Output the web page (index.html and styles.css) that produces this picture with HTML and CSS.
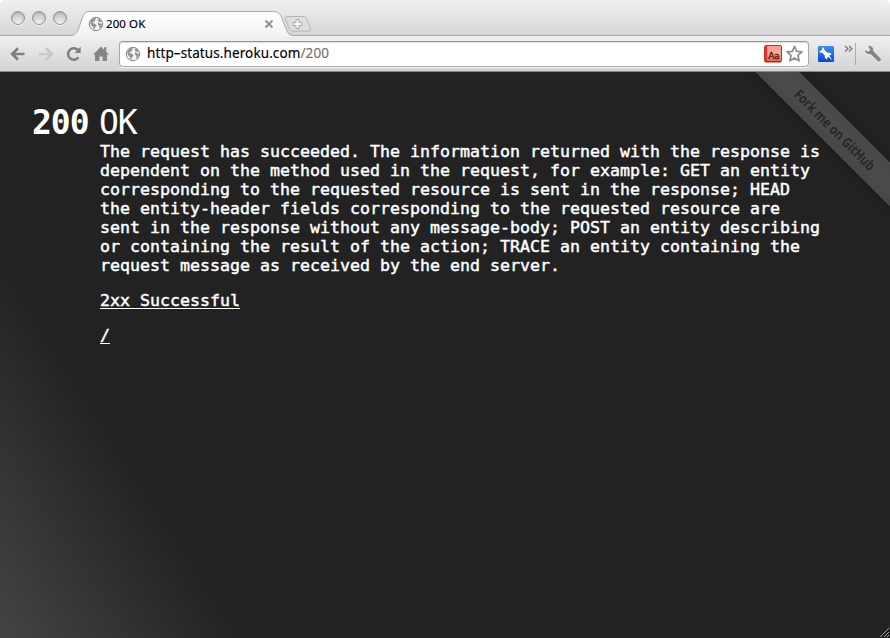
FILE: index.html
```html
<!DOCTYPE html>
<html lang="en">
<head>
<meta charset="utf-8">
<title>200 OK</title>
<link rel="stylesheet" href="styles.css">
</head>
<body>
<svg class="defs" width="0" height="0" aria-hidden="true">
  <defs>
    <linearGradient id="tabfill" x1="0" y1="0" x2="0" y2="1"><stop offset="0" stop-color="#fff"/><stop offset="1" stop-color="#f1f1f1"/></linearGradient>
    <linearGradient id="red" x1="0" y1="0" x2="0" y2="1"><stop offset="0" stop-color="#ff9a88"/><stop offset=".45" stop-color="#fda696"/><stop offset="1" stop-color="#f0604e"/></linearGradient>
    <linearGradient id="blue" x1="0" y1="0" x2="0" y2="1"><stop offset="0" stop-color="#3f8bed"/><stop offset="1" stop-color="#0747dd"/></linearGradient>
    <symbol id="globe" viewBox="0 0 16 16">
      <circle cx="8" cy="8" r="6.700" fill="#f6f6f6" stroke="#858585"/>
      <path fill="#969696" d="M2.500 4.800 4.600 2.500 7.400 2l.8 1.200-1.300.6.2 1.300-1.400.8-1 .2-.2 1 1.900.3 1.600 1.200.5 1.300-1.500 1.400-.6 2.300-1-.4-.5-2.300L3.300 9.500l-1-1.900zM9.500 2.300l2.500 1 1.700 2.100-.8.700-1.200-.3-.8.8.9.700 1.500.2.700 1.300-.7 2.300-1.500 1.500-.6-1.400.1-1.500-1.300-1-.1-1.700 1-1.300-1-1.100z"/>
    </symbol>
  </defs>
</svg>
<div class="window">
  <header class="tabs">
    <div class="lights"><i></i><i></i><i></i></div>
    <div class="tab">
      <svg class="shape" width="224" height="26" viewBox="0 0 224 26"><path fill="url(#tabfill)" stroke="#a7a7a7" d="M0 24.5c5 0 7-2 9-8l3-9c2-5 3.500-7 7-7H203c5 0 7 2 9 7l4 10c2 5 3 7 8 7V27H0z"/><path stroke="#f0f0f0" stroke-width="2" d="M0 26H224"/></svg>
      <svg class="favicon" width="16" height="16"><use href="#globe"/></svg>
      <span class="title">200 OK</span>
      <svg class="close" width="10" height="10" viewBox="0 0 10 10"><path stroke="#969696" stroke-width="2.200" d="m1.500 1.500 7 7m0-7-7 7"/></svg>
    </div>
    <svg class="newtab" width="28" height="18" viewBox="0 0 28 18"><path fill="#dedede" stroke="#b5b5b5" d="M3 1.500H19c2 0 3 .5 4 3l3 8c1 3 .5 3.500-1 3.500H9c-2 0-3-1-4-3L1.500 4C1 2.200 1.500 1.500 3 1.500z"/><path fill="#f5f5f5" stroke="#aaa" d="M12 4.500h3v3h3v3h-3v3h-3v-3H9v-3h3z"/></svg>
  </header>
  <nav class="toolbar">
    <svg class="back" width="16" height="14" viewBox="0 0 16 14"><path fill="none" stroke="#808080" stroke-width="2.700" d="M14.500 7H3M8 1.300 2.200 7 8 12.700"/></svg>
    <svg class="forward" width="16" height="14" viewBox="0 0 16 14"><path fill="none" stroke="#c9c9c9" stroke-width="2.700" d="M1 7h11.500M8 1.300 13.800 7 8 12.700"/></svg>
    <svg class="reload" width="16" height="16" viewBox="0 0 16 16"><path fill="none" stroke="#808080" stroke-width="2.500" d="M12.400 11.300A5.700 5.700 0 1 1 12 4.200"/><path fill="#808080" d="M14.700.8V7H8.500z"/></svg>
    <svg class="home" width="16" height="16" viewBox="0 0 16 16"><path fill="#858585" d="M8 .6 11 3.700V1.200h2.300V6L16 8.800h-2V15H9.600v-4.500H6.400V15H2V8.800H0z"/></svg>
    <div class="omnibox">
      <svg width="16" height="16"><use href="#globe"/></svg>
      <span class="url">http–status.heroku.com<em>/200</em></span>
      <svg class="dict" width="18" height="18" viewBox="0 0 18 18"><rect x=".5" y=".5" width="17" height="16.500" rx="1.500" fill="url(#red)" stroke="#bd3529"/><path stroke="#d9392c" stroke-width="2.500" d="M2 1v15"/><path stroke="#a3251c" d="M1 16.500h16"/><text x="4.200" y="13.500">Aa</text></svg>
      <svg class="star" width="18" height="18" viewBox="0 0 18 18"><path fill="#fff" stroke="#8c8c8c" stroke-width="1.700" stroke-linejoin="round" d="m8.500 1.300 2.100 5 5.400.5-4.100 3.600 1.200 5.500-4.600-2.900-4.600 2.900 1.200-5.500L1 6.800l5.400-.5z"/></svg>
    </div>
    <svg class="pin" width="16" height="16" viewBox="0 0 16 16"><rect width="16" height="16" rx="1" fill="url(#blue)"/><path fill="#fff" d="M4.800 1 6.200 2.400l.1 1.700 3.200 2.700 2.600-.1 1.500 1.500-2.400 1.600 3.500 4.700-4.700-3.700-1.300 2.700-1.900-1.900.1-2.200-2.900-2.900-1.800.2L1 5.500l2.600-1.300z"/></svg>
    <svg class="more" width="10" height="8" viewBox="0 0 10 8"><path fill="none" stroke="#777" stroke-width="1.300" d="m1 1 3 2.800-3 2.800M5 1l3 2.800-3 2.800"/></svg>
    <span class="divider"></span>
    <svg class="wrench" width="18" height="18" viewBox="0 0 18 18"><path fill="#858585" d="M4.200 1.200C7 .3 9.500 2.400 9.300 5.300l-.1.800 7.300 7.300c1.300 1.500-1 3.800-2.700 2.600L6.500 8.900C3.600 9.500.8 7.800 1 5l3 1.700 2.400-1.800z"/></svg>
  </nav>
  <main class="page">
    <div class="ribbon"><span>Fork me on GitHub</span></div>
    <h1><b>200</b><span>OK</span></h1>
    <section>
      <p>The request has succeeded. The information returned with the response is<br>dependent on the method used in the request, for example: GET an entity<br>corresponding to the requested resource is sent in the response; HEAD<br>the entity-header fields corresponding to the requested resource are<br>sent in the response without any message-body; POST an entity describing<br>or containing the result of the action; TRACE an entity containing the<br>request message as received by the end server.</p>
      <p><a href="#">2xx Successful</a></p>
      <p><a href="#">/</a></p>
    </section>
    <svg class="grip" width="12" height="12" viewBox="0 0 12 12"><path stroke="#aaa" stroke-width=".9" d="M2 11 11 2M6 11l5-5M9 11l2-2"/></svg>
  </main>
</div>
</body>
</html>
```

FILE: styles.css
```css
* { box-sizing: border-box; }
body { margin: 0; background: #fff; }
svg { display: block; flex: none; }
.defs { position: absolute; }
.window { width: 890px; height: 638px; overflow: hidden; border-radius: 5px 5px 0 0; display: flex; flex-direction: column; font-family: "Noto Sans", sans-serif; }
.tabs { height: 36px; flex: none; display: flex; align-items: flex-start; background: linear-gradient(#f0f0f0, #d6d6d6); border-bottom: 1px solid #a7a7a7; padding-left: 11px; }
.lights { display: flex; gap: 7px; padding-top: 11px; width: 59px; flex: none; }
.lights i { width: 14px; height: 14px; border-radius: 50%; border: 1px solid #929292; background: radial-gradient(circle at 50% 95%, #f2f2f2, #c6c6c6 75%); box-shadow: inset 0 1px 1px #aaa, 0 1px 0 #f2f2f2; }
.tab { position: relative; width: 214px; height: 25px; margin-top: 11px; display: flex; align-items: center; padding-left: 18px; }
.shape { position: absolute; left: 0; top: 0; }
.favicon, .title, .close { position: relative; }
.title { font-size: 11.500px; line-height: 16px; letter-spacing: .1px; margin-left: 2px; color: #000; width: 158px; -webkit-text-stroke: .15px; }
.newtab { margin: 15px 0 0 0; }
.toolbar { height: 36px; flex: none; display: flex; align-items: center; background: linear-gradient(#f0f0f0, #d3d3d3); border-bottom: 1px solid #888; padding-left: 10px; }
.forward { margin-left: 12px; }
.reload { margin-left: 12px; }
.home { margin-left: 11px; }
.omnibox { width: 690px; height: 26px; margin-left: 10px; background: #fff; border: 1px solid #a9a9a9; border-top-color: #979797; border-radius: 4px; box-shadow: inset 0 1px 1px #ddd, 0 1px 0 #f2f2f2; display: flex; align-items: center; padding-left: 5px; }
.url { position: relative; top: -1px; font-size: 13.500px; line-height: 20px; letter-spacing: .1px; color: #000; margin-left: 6px; width: 617px; white-space: nowrap; -webkit-text-stroke: .15px; }
.url em { font-style: normal; color: #737373; }
.dict text { font: 9px "DejaVu Sans", sans-serif; fill: #501310; stroke: #501310; stroke-width: .3px; letter-spacing: -.3px; }
.star { margin-left: 4px; }
.pin { margin-left: 9px; }
.more { margin: -10px 0 0 10px; }
.divider { width: 1px; height: 22px; margin-left: 1px; background: #aaa; }
.wrench { margin-left: 8px; }
.page { position: relative; flex: 1; overflow: hidden; background: linear-gradient(57.200deg, #444 0, #222 208px); color: #fff; font-family: "DejaVu Sans Mono", monospace; padding: 31px 32px; }
h1 { margin: 0 0 -1px; font-size: 33px; font-weight: normal; line-height: 40px; letter-spacing: -1px; display: flex; }
h1 b { width: 67px; }
section { padding-left: 68px; }
p { margin: 0 0 16px; font-size: 16.610px; line-height: 19px; white-space: nowrap; -webkit-text-stroke: .45px #fff; }
a { color: #fff; text-decoration: underline; text-decoration-thickness: 1px; text-underline-offset: 2px; }
.ribbon { position: absolute; left: 735px; top: 42px; width: 200px; height: 31px; background: linear-gradient(#474747, #4c4c4c 50%, #474747); box-shadow: 0 0 7px #1a1a1a; transform: rotate(45deg); display: flex; align-items: center; justify-content: center; outline: 1px dotted #4e4e4e; outline-offset: -2px; }
.ribbon span { font: 700 14px "Open Sans", sans-serif; color: #272727; letter-spacing: -.2px; white-space: nowrap; transform: scaleX(.84); }
.grip { position: absolute; right: 0; bottom: 0; }
```
